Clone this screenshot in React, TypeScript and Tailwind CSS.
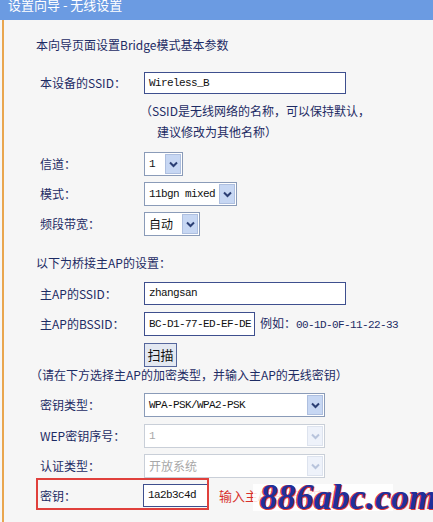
import React from "react";

const cjk = "font-['Noto_Sans_CJK_SC',sans-serif]";
const mono = "font-['Liberation_Mono','Noto_Sans_CJK_SC',monospace] text-[11px] tracking-[-0.6px]";

function Chevron({ disabled }: { disabled?: boolean }) {
    return (
        <svg width="9" height="7" viewBox="0 0 9 7">
            <path d="M1 1.5 L4.5 5 L8 1.5" fill="none" stroke={disabled ? "#b8c4dc" : "#2c3f74"} strokeWidth="2" />
        </svg>
    );
}

interface SelectProps {
    value: string;
    width: string;
    disabled?: boolean;
    monoText?: boolean;
}

function Select(props: SelectProps) {
    return (
        <div className={`flex h-full ${props.width} items-stretch bg-white border ${props.disabled ? "border-[#c9cfd8]" : "border-[#8a9bb8]"}`}>
            <div className={`flex-1 flex items-center pl-[4px] overflow-hidden whitespace-nowrap ${props.monoText ? mono : `${cjk} text-[12px]`} ${props.disabled ? "text-[#a8a8a8]" : "text-[#111]"}`}>
                {props.value}
            </div>
            <div className={`w-[16px] m-[1px] flex items-center justify-center border ${props.disabled ? "bg-[#eef2fa] border-[#dde3ee]" : "bg-[#c7d7f3] border-[#aebfdf]"}`}>
                <Chevron disabled={props.disabled} />
            </div>
        </div>
    );
}

function TextInput({ value, width }: { value: string; width: string }) {
    return (
        <div className={`h-full ${width} bg-white border-[1.5px] border-[#3e4f8e] flex items-center pl-[4px] text-[#111] ${mono}`}>
            {value}
        </div>
    );
}

function Row({ label, children, className }: { label: string; children: React.ReactNode; className: string }) {
    return (
        <div className={`flex items-center ${className}`}>
            <div className={`w-[108px] shrink-0 pl-[4px] text-[12px] text-[#1d2b64] ${cjk}`}>{label}</div>
            {children}
        </div>
    );
}

export default function App() {
    return (
        <div className={`relative w-[433px] h-[522px] overflow-hidden bg-[#f6f6f6] ${cjk}`}>
            <div className="h-[20px] bg-[#6b9be2] overflow-hidden">
                <div className="pl-[8px] -mt-[4px] text-[13px] leading-[18px] text-white">设置向导 - 无线设置</div>
            </div>
            <div className="ml-[2px] border-l-2 border-[#e9a64f] h-[502px] pl-[32px]">
                <div className="pt-[17px] text-[12px] leading-[16px] text-[#1d2b64]">本向导页面设置Bridge模式基本参数</div>

                <Row label="本设备的SSID：" className="mt-[19px] h-[22px]">
                    <TextInput value="Wireless_B" width="w-[202px]" />
                </Row>
                <div className="mt-[6px] pl-[104px] text-[12px] leading-[21px] text-[#1d2b64]">
                    <div>（SSID是无线网络的名称，可以保持默认，</div>
                    <div className="pl-[17px]">建议修改为其他名称）</div>
                </div>

                <Row label="信道：" className="mt-[10px] h-[24px]">
                    <Select value="1" width="w-[39px]" monoText />
                </Row>
                <Row label="模式：" className="mt-[6px] h-[24px]">
                    <Select value="11bgn mixed" width="w-[93px]" monoText />
                </Row>
                <Row label="频段带宽：" className="mt-[6px] h-[24px]">
                    <Select value="自动" width="w-[56px]" />
                </Row>

                <div className="mt-[19px] text-[12px] leading-[16px] text-[#1d2b64]">以下为桥接主AP的设置：</div>
                <Row label="主AP的SSID：" className="mt-[11px] h-[23px]">
                    <TextInput value="zhangsan" width="w-[202px]" />
                </Row>
                <Row label="主AP的BSSID：" className="mt-[7px] h-[24px]">
                    <TextInput value="BC-D1-77-ED-EF-DE" width="w-[111px]" />
                    <span className="ml-[5px] text-[12px] text-[#1d2b64] whitespace-nowrap">
                        例如：<span className={mono}>00-1D-0F-11-22-33</span>
                    </span>
                </Row>
                <div className="mt-[5px] pl-[108px] h-[24px]">
                    <button className="h-full w-[33px] bg-[#e3e8f1] border-[1.5px] border-[#55669c] text-[13px] text-[#111] leading-none">扫描</button>
                </div>

                <div className="mt-[2px] -ml-[6px] text-[12px] leading-[16px] text-[#1d2b64] whitespace-nowrap">（请在下方选择主AP的加密类型，并输入主AP的无线密钥）</div>

                <Row label="密钥类型：" className="mt-[10px] h-[24px]">
                    <Select value="WPA-PSK/WPA2-PSK" width="w-[181px]" monoText />
                </Row>
                <Row label="WEP密钥序号：" className="mt-[7px] h-[24px]">
                    <Select value="1" width="w-[181px]" monoText disabled />
                </Row>
                <Row label="认证类型：" className="mt-[6px] h-[24px]">
                    <Select value="开放系统" width="w-[181px]" disabled />
                </Row>
                <Row label="密钥：" className="mt-[6px] h-[23px]">
                    <div className="-ml-[1px] h-full">
                        <TextInput value="1a2b3c4d" width="w-[66px]" />
                    </div>
                    <span className="ml-[10px] text-[13px] text-[#d8302c] whitespace-nowrap">输入主AP的无线密钥</span>
                </Row>
            </div>

            {/* annotation and watermark laid over the screenshot */}
            <div className="absolute left-[36px] top-[478px] w-[173px] h-[32px] border-2 border-[#e0403c]" />
            <div className="absolute left-[253px] top-[484px] w-[140px] h-[27px] bg-white/85" />
            <div className="absolute left-[260px] top-[476px] font-['Liberation_Serif',serif] italic font-bold text-[35px] leading-[44px] text-[#20309a] [text-shadow:1px_1px_0_#e03434,-1px_0_0_#e03434] tracking-[0.5px]">
                886abc.com
            </div>
        </div>
    );
}
